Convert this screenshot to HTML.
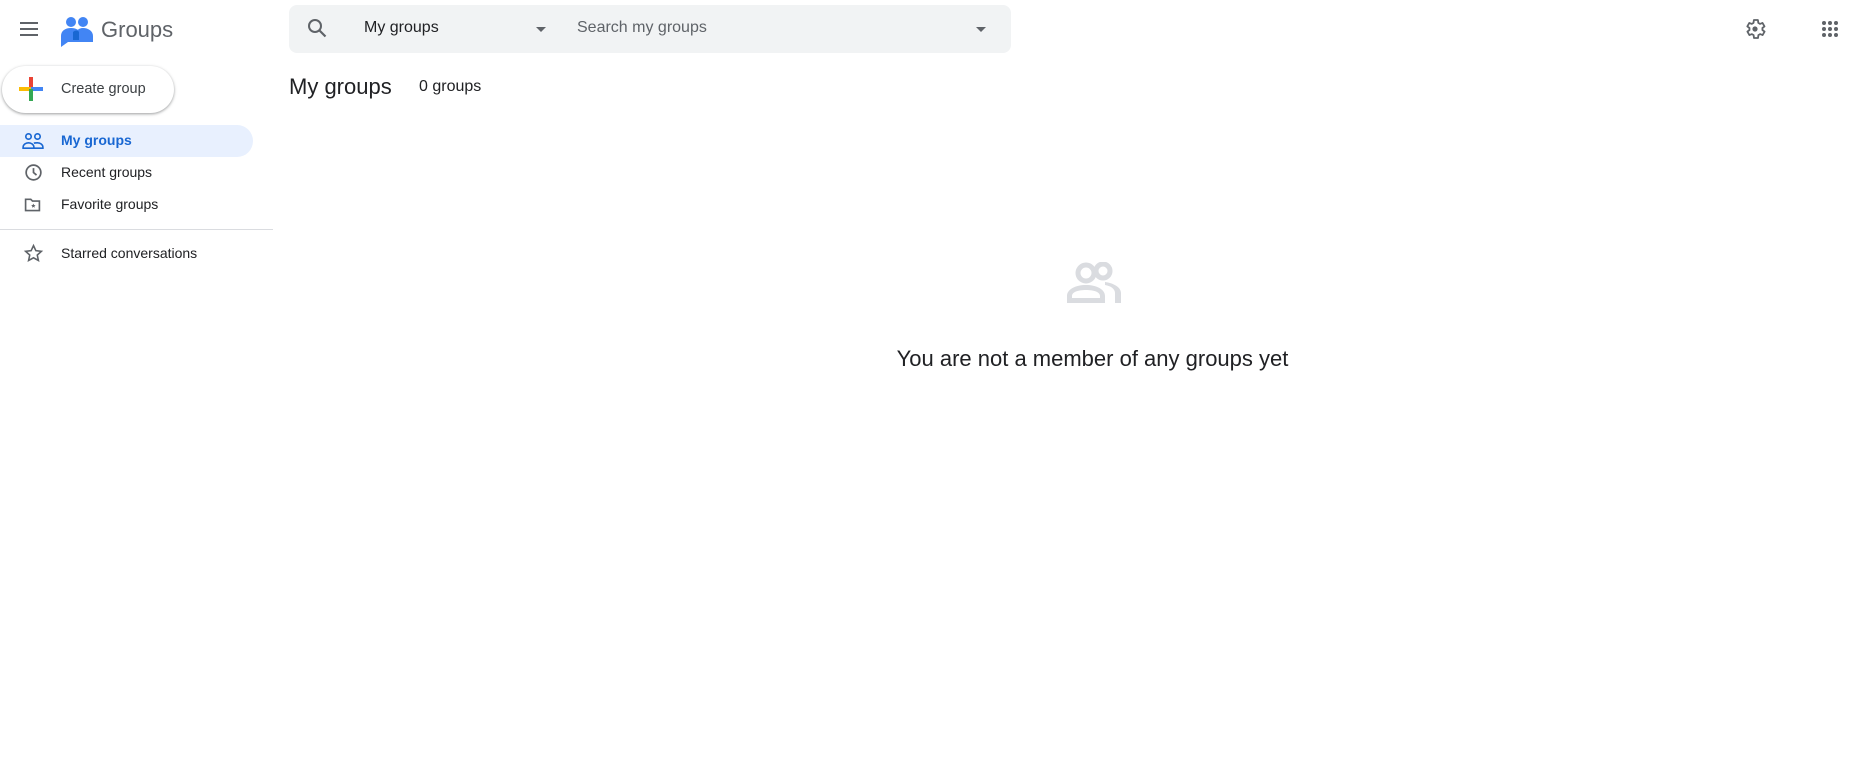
<!DOCTYPE html>
<html><head><style>
body{margin:0;width:1859px;height:771px;background:#fff;font-family:"Liberation Sans",sans-serif;position:relative;overflow:hidden;color:#202124}
.a{position:absolute}
</style></head><body>
<svg class="a" style="left:17px;top:17px" width="24" height="24" viewBox="0 0 24 24"><path d="M3 6h18M3 12h18M3 18h18" stroke="#5f6368" stroke-width="2"/></svg>
<svg class="a" style="left:60px;top:14px" width="34" height="34" viewBox="0 0 34 34">
<circle cx="11" cy="8" r="5" fill="#4285f4"/><circle cx="23" cy="8" r="5" fill="#4285f4"/>
<path d="M1 33V22c0-5 4-8 10-8s10 3 10 8v6H8z" fill="#4285f4"/><path d="M14 24c0-6 4-10 9-10s10 3 10 8v6H14z" fill="#4285f4"/>
<path d="M13 18c2-2 5-2 6 0v8h-6z" fill="#1967d2"/></svg>
<div class="a" style="left:101px;top:17px;font-size:22px;color:#5f6368">Groups</div>

<div class="a" style="left:289px;top:5px;width:722px;height:48px;background:#f1f3f4;border-radius:8px"></div>
<svg class="a" style="left:305px;top:16px" width="24" height="24" viewBox="0 0 24 24"><circle cx="10" cy="10" r="6" fill="none" stroke="#5f6368" stroke-width="2"/><path d="M14.5 14.5l6 6" stroke="#5f6368" stroke-width="2.2"/></svg>
<div class="a" style="left:364px;top:19px;font-size:16px;color:#202124">My groups</div>
<div class="a" style="left:536px;top:27px;border:5px solid transparent;border-top-color:#5f6368"></div>
<div class="a" style="left:577px;top:19px;font-size:16px;color:#5f6368">Search my groups</div>
<div class="a" style="left:976px;top:27px;border:5px solid transparent;border-top-color:#5f6368"></div>

<svg class="a" style="left:1743px;top:17px" width="24" height="24" viewBox="0 0 24 24"><path fill="none" stroke="#5f6368" stroke-width="1.8" stroke-linejoin="round" d="M19.4 13a7.5 7.5 0 000-2l2.1-1.6-2-3.5-2.5 1a7 7 0 00-1.7-1L14.9 3h-4l-.4 2.9a7 7 0 00-1.7 1l-2.5-1-2 3.5L6.5 11a7.5 7.5 0 000 2l-2.1 1.6 2 3.5 2.5-1a7 7 0 001.7 1l.4 2.9h4l.4-2.9a7 7 0 001.7-1l2.5 1 2-3.5z"/><circle cx="12" cy="12" r="2.6" fill="#5f6368"/></svg>
<svg class="a" style="left:1818px;top:17px" width="24" height="24" viewBox="0 0 24 24" fill="#5f6368"><circle cx="6" cy="6" r="2"/><circle cx="12" cy="6" r="2"/><circle cx="18" cy="6" r="2"/><circle cx="6" cy="12" r="2"/><circle cx="12" cy="12" r="2"/><circle cx="18" cy="12" r="2"/><circle cx="6" cy="18" r="2"/><circle cx="12" cy="18" r="2"/><circle cx="18" cy="18" r="2"/></svg>

<div class="a" style="left:2px;top:66px;width:172px;height:47px;border-radius:24px;box-shadow:0 1px 3px rgba(60,64,67,.35),0 1px 2px rgba(60,64,67,.2);background:#fff"></div>
<div class="a" style="left:29px;top:77px;width:4px;height:12px;background:#ea4335"></div>
<div class="a" style="left:19px;top:87px;width:12px;height:4px;background:#fbbc04"></div>
<div class="a" style="left:31px;top:87px;width:12px;height:4px;background:#4285f4"></div>
<div class="a" style="left:29px;top:89px;width:4px;height:12px;background:#34a853"></div>
<div class="a" style="left:61px;top:81px;font-size:14.5px;color:#3c4043">Create group</div>

<div class="a" style="left:0;top:125px;width:253px;height:32px;background:#e8f0fe;border-radius:0 16px 16px 0"></div>
<svg class="a" style="left:22px;top:132px" width="22" height="18" viewBox="0 0 24 20" fill="none" stroke="#1967d2" stroke-width="1.8"><circle cx="7" cy="5" r="3"/><circle cx="17" cy="5" r="3"/><path d="M1 17c0-3 3-5 6-5s6 2 6 5v1H1zM13 12.5c1-.5 2.5-.5 4-.5 3 0 6 2 6 5v1h-10"/></svg>
<div class="a" style="left:61px;top:132px;font-size:14px;font-weight:bold;color:#1967d2">My groups</div>
<svg class="a" style="left:24px;top:163px" width="19" height="19" viewBox="0 0 22 22" fill="none" stroke="#5f6368" stroke-width="2"><circle cx="11" cy="11" r="8.5"/><path d="M11 6v5l3.5 3"/></svg>
<div class="a" style="left:61px;top:164px;font-size:14px;color:#202124">Recent groups</div>
<svg class="a" style="left:23px;top:195px" width="19" height="19" viewBox="0 0 22 22" fill="none" stroke="#5f6368" stroke-width="1.9"><path d="M3 5h6l2 2h8v11H3z"/><path d="M12 10l.8 1.6 1.7.2-1.3 1.2.4 1.7-1.6-.9-1.6.9.4-1.7-1.3-1.2 1.7-.2z" fill="#5f6368" stroke="none"/></svg>
<div class="a" style="left:61px;top:196px;font-size:14px;color:#202124">Favorite groups</div>
<div class="a" style="left:0;top:229px;width:273px;height:1px;background:#dadce0"></div>
<svg class="a" style="left:23px;top:243px" width="21" height="21" viewBox="0 0 24 24" fill="none" stroke="#5f6368" stroke-width="1.8"><path d="M12 3l2.7 5.8 6.3.7-4.7 4.3 1.3 6.2L12 16.9 6.4 20l1.3-6.2L3 9.5l6.3-.7z"/></svg>
<div class="a" style="left:61px;top:245px;font-size:14px;color:#202124">Starred conversations</div>

<div class="a" style="left:289px;top:74px;font-size:22px;color:#202124">My groups</div>
<div class="a" style="left:419px;top:78px;font-size:16px;color:#202124">0 groups</div>

<svg class="a" style="left:1065px;top:262px" width="57" height="41" viewBox="0 0 57 41" fill="#dadce0"><circle cx="21" cy="11" r="8" fill="none" stroke="#dadce0" stroke-width="5"/><circle cx="38" cy="9" r="7" fill="none" stroke="#dadce0" stroke-width="5"/><path d="M2 41v-7c0-7 9-11 19-11s19 4 19 11v7z M7 36h28v-2c0-4-6-6-14-6S7 30 7 34z" fill-rule="evenodd"/><path d="M40 20c8 1 16 5 16 11v10h-6V31c0-4-4-7-10-8z"/></svg>
<div class="a" style="left:890px;top:346px;width:405px;text-align:center;font-size:22px;color:#202124">You are not a member of any groups yet</div>
</body></html>
